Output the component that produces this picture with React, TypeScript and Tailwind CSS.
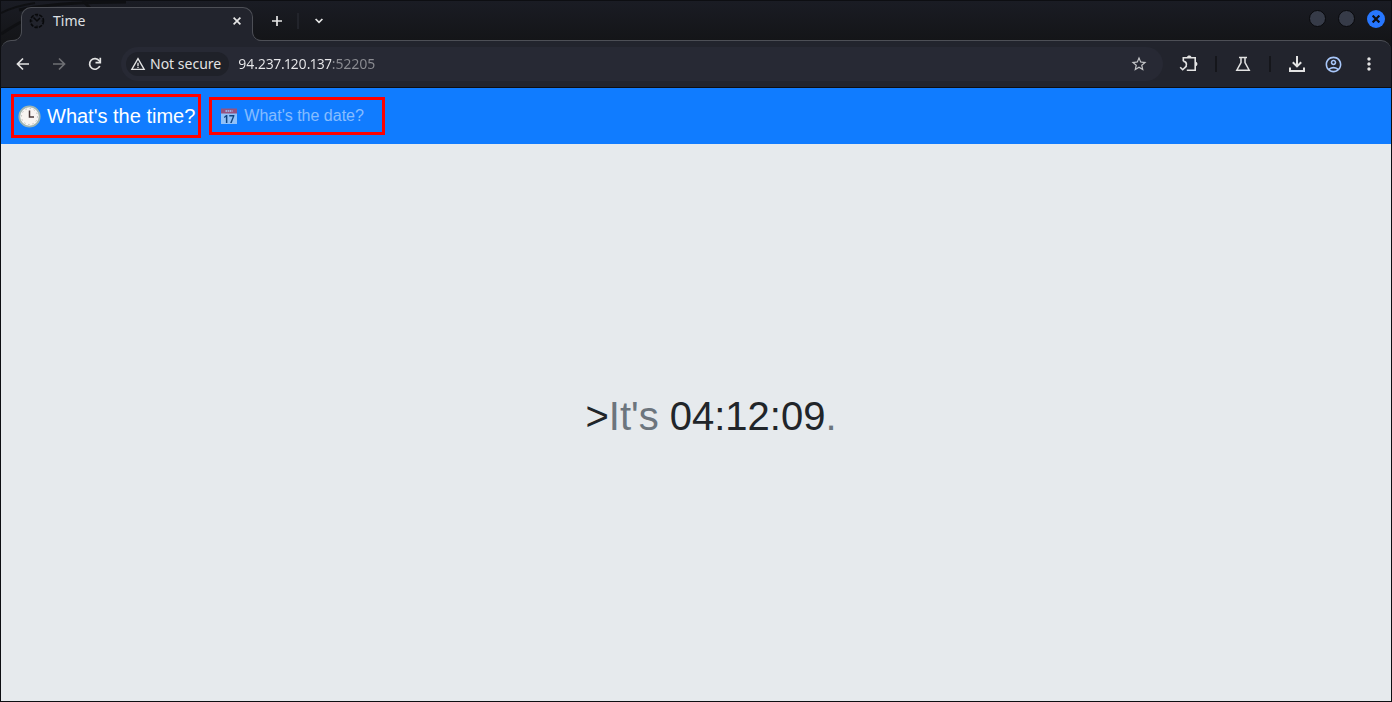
import React from 'react';
import { MdMoreVert, MdOutlineAccountCircle, MdStarBorder, MdWarningAmber } from 'react-icons/md';

const HOST = '94.237.120.137';
const PORT = ':52205';

const App: React.FC = () => {
  return (
    <div className="flex min-h-screen flex-col border border-[#0d0e12] bg-[#e6eaed] font-['Noto_Sans',sans-serif] text-sm">
      <TabStrip />
      <Toolbar />
      <TimePage />
    </div>
  );
};

const TabStrip: React.FC = () => (
  <header className="relative flex h-[39px] items-end justify-between bg-linear-to-b from-[#1a1c24] to-[#141518] pl-5">
    <Wallpaper />
    <div className="relative flex h-full items-end">
      <div className="relative z-10 -mb-px flex h-[34px] w-[232px] items-center rounded-t-[10px] border border-b-0 border-[#4d4f56] bg-[#22242d] pr-[7px] pb-[7px] pl-[7px]">
        <TabFlare className="absolute -left-[10px] bottom-0" />
        <TabFlare className="absolute -right-[10px] bottom-0 -scale-x-100" />
        <ClockFavicon />
        <span className="ml-2 grow text-sm leading-5 text-[#dfe0e3]">Time</span>
        <button type="button" aria-label="Close tab" className="flex size-4 items-center justify-center text-[#e6e6e6]">
          <svg width="8" height="8" viewBox="0 0 8 8" stroke="currentColor" strokeWidth="1.7">
            <path d="M.6.6l6.8 6.8M7.4.6L.6 7.4" />
          </svg>
        </button>
      </div>
      <div className="flex h-full items-center pt-px pl-4">
        <button type="button" aria-label="New tab" className="flex size-4 items-center justify-center text-[#e6e6e6]">
          <svg width="10" height="10" viewBox="0 0 10 10" stroke="currentColor" strokeWidth="1.7">
            <path d="M5 0v10M0 5h10" />
          </svg>
        </button>
        <span className="mx-3 h-4 w-0.5 bg-[#22242b]"></span>
        <button type="button" aria-label="Search tabs" className="flex size-4 items-center justify-center text-[#e6e6e6]">
          <svg width="8" height="6" viewBox="0 0 8 6" fill="none" stroke="currentColor" strokeWidth="1.7">
            <path d="M.6 1L4 4.4 7.4 1" />
          </svg>
        </button>
      </div>
    </div>
    <div className="flex h-full items-center gap-3 pr-1.5 pb-1">
      <button type="button" aria-label="Minimize" className="size-[17px] rounded-full border border-[#08090c] bg-[#363b48]"></button>
      <button type="button" aria-label="Maximize" className="size-[17px] rounded-full border border-[#08090c] bg-[#363b48]"></button>
      <button type="button" aria-label="Close" className="flex size-[18px] items-center justify-center rounded-full bg-[#2777ff] text-[#0b0d14]">
        <svg width="8" height="8" viewBox="0 0 8 8" stroke="currentColor" strokeWidth="2.2">
          <path d="M.6.6l6.8 6.8M7.4.6L.6 7.4" />
        </svg>
      </button>
    </div>
  </header>
);

const Wallpaper: React.FC = () => (
  <svg className="absolute top-0 left-0" width="190" height="39" viewBox="0 0 190 39" fill="none" stroke="#0f1013">
    <path d="M0 33C8 28 14 24 20 21M18 9C45 3 80 1 125 1" strokeWidth="3" />
    <path d="M0 12C10 7 20 4 34 2" strokeWidth="2" />
    <path d="M82 0l7 7" strokeWidth="3" />
  </svg>
);

const TabFlare: React.FC<{ className: string }> = ({ className }) => (
  <svg className={className} width="10" height="10" viewBox="0 0 10 10" fill="none">
    <path d="M0 10C6 10 9.5 7 9.5 0H10V10Z" fill="#22242d" />
    <path d="M0 9.5C6 9.5 9.5 6 9.5 0" stroke="#4d4f56" />
  </svg>
);

const ClockFavicon: React.FC = () => (
  <svg width="16" height="16" viewBox="0 0 16 16" fill="none" stroke="#08090b">
    <circle cx="8" cy="8" r="6.5" strokeWidth="1.6" strokeDasharray="3.4 1.2" />
    <path d="M4.5 4.500L8 8l3-3" strokeWidth="1.5" />
    <path d="M8 2v1.500M8 12.500V14M2 8h1.500M12.500 8H14" />
  </svg>
);

const ToolButton: React.FC<{ label: string; className?: string; children: React.ReactNode }> = ({ label, className = '', children }) => (
  <button type="button" aria-label={label} className={`flex size-5 shrink-0 items-center justify-center ${className}`}>
    {children}
  </button>
);

const Toolbar: React.FC = () => (
  <div className="flex bg-[#141518]">
    <div className="flex h-12 grow items-center rounded-t-[10px] border-t border-b border-t-[#4d4f56] border-b-[#0d0e12] bg-[#22242d] px-3 text-[#e3e3e3]">
      <div className="flex gap-4">
        <ToolButton label="Back">
          <svg width="14" height="14" viewBox="0 0 14 14" fill="none" stroke="currentColor" strokeWidth="1.7">
            <path d="M13 7H2M7 1.500L1.500 7 7 12.500" />
          </svg>
        </ToolButton>
        <ToolButton label="Forward" className="text-[#6f7074]">
          <svg width="14" height="14" viewBox="0 0 14 14" fill="none" stroke="currentColor" strokeWidth="1.7">
            <path d="M1 7h11M7 1.500L12.500 7 7 12.500" />
          </svg>
        </ToolButton>
        <ToolButton label="Reload">
          <svg width="14" height="14" viewBox="0 0 14 14" fill="none" stroke="currentColor" strokeWidth="1.7">
            <path d="M11.800 9A5.300 5.300 0 1 1 11.200 3.800L12.500 5.200" />
            <path d="M12.300 .8v4.800H7.500" />
          </svg>
        </ToolButton>
      </div>
      <form className="mx-4 flex h-[34px] grow items-center rounded-full bg-[#272934] pr-3.5 pl-[5px]">
        <button type="button" className="flex h-6 items-center gap-1 rounded-full bg-[#1f2129] pr-2 pl-1">
          <MdWarningAmber className="size-4" />
          <span>Not secure</span>
        </button>
        <input
          type="text"
          aria-label="Address"
          defaultValue={HOST + PORT}
          className="ml-[9px] h-6 min-w-0 grow bg-linear-to-r from-[#e8e8ea] from-[93px] to-[#8b8c92] to-[93px] bg-clip-text pb-0.5 proportional-nums text-transparent outline-none"
        />
        <ToolButton label="Bookmark" className="text-[#c4c5c8]">
          <MdStarBorder className="size-[18px]" />
        </ToolButton>
      </form>
      <div className="flex items-center gap-4">
        <ToolButton label="Extensions">
          <svg width="20" height="20" viewBox="0 0 20 20" fill="none" stroke="currentColor" strokeWidth="1.6">
            <path d="M4.300 7.300V3.800h11.900v12.400H7.800" />
            <path d="M4.300 7.300c4 .4 4 4.800 1.200 6.700M1.200 13.200l2.500 2.500 4-3.700" />
            <path d="M8 3.500c0-2.600 4.400-2.600 4.400 0zM16.500 7.800c2.600 0 2.600 4.400 0 4.400z" fill="currentColor" stroke="none" />
          </svg>
        </ToolButton>
        <span className="h-4 w-0.5 bg-[#15161b]"></span>
        <ToolButton label="Labs">
          <svg width="16" height="16" viewBox="0 0 16 16" fill="none" stroke="currentColor" strokeWidth="1.5">
            <path d="M4 1.500h8M6 1.500v5L1.800 14.200h12.400L10 6.500v-5" />
          </svg>
        </ToolButton>
        <span className="h-4 w-0.5 bg-[#15161b]"></span>
        <ToolButton label="Downloads">
          <svg width="16" height="16" viewBox="0 0 16 16" fill="none" stroke="currentColor" strokeWidth="2">
            <path d="M8 0v10M3.800 6.200L8 10.400l4.200-4.200M1 11.500V15h14v-3.500" />
          </svg>
        </ToolButton>
        <ToolButton label="Profile" className="text-[#a8c7fa]">
          <MdOutlineAccountCircle className="size-[19px]" />
        </ToolButton>
        <ToolButton label="Menu">
          <MdMoreVert className="size-5" />
        </ToolButton>
      </div>
    </div>
  </div>
);

const ClockEmoji: React.FC = () => (
  <svg width="23" height="23" viewBox="0 0 23 23" fill="none">
    <circle cx="11.5" cy="11.5" r="10.2" fill="#f8f5f2" stroke="#9db4b4" strokeWidth="1.8" />
    <circle cx="11.5" cy="11.5" r="8" stroke="#a5a5a2" strokeWidth="1" strokeDasharray="1 3.19" />
    <path d="M11.500 5.500V12h4.500" stroke="#4a3a3a" strokeWidth="1.5" />
  </svg>
);

const CalendarEmoji: React.FC = () => (
  <svg width="18" height="18" viewBox="0 0 18 18">
    <path d="M1 6h16v11H1z" fill="#e8eff5" />
    <path d="M1 1.500h16V6.500H1z" fill="#f0382c" />
    <path d="M5.500 4h7" stroke="#fff" strokeWidth="1.4" strokeDasharray="1.5 .6" />
    <text x="9" y="15.5" textAnchor="middle" fill="#10202c" className="font-['Noto_Sans',sans-serif] text-[10px] font-bold">17</text>
  </svg>
);

const TimePage: React.FC = () => (
  <div className="flex grow flex-col font-['Liberation_Sans',Arial,sans-serif]">
    <nav className="flex h-14 items-center gap-2 bg-[#107cff] px-2.5">
      <a href="#time" className="flex h-11 items-center gap-1.5 border-[3px] border-[#ff0000] pr-[3px] pl-1 text-xl text-white">
        <ClockEmoji />
        <span>What's the time?</span>
      </a>
      <a href="#date" className="flex h-[38px] w-[176px] items-center gap-1.5 border-[3px] border-[#ff0000] pl-2 text-base text-white/50">
        <span className="opacity-60">
          <CalendarEmoji />
        </span>
        <span>What's the date?</span>
      </a>
    </nav>
    <main className="flex grow items-center justify-center pb-3.5 pl-[30px]">
      <h1 className="text-[40px] leading-[48px] text-[#212529]">
        &gt;<span className="text-[#6c757d]">It's </span>04:12:09<span className="text-[#6c757d]">.</span>
      </h1>
    </main>
  </div>
);

export default App;
